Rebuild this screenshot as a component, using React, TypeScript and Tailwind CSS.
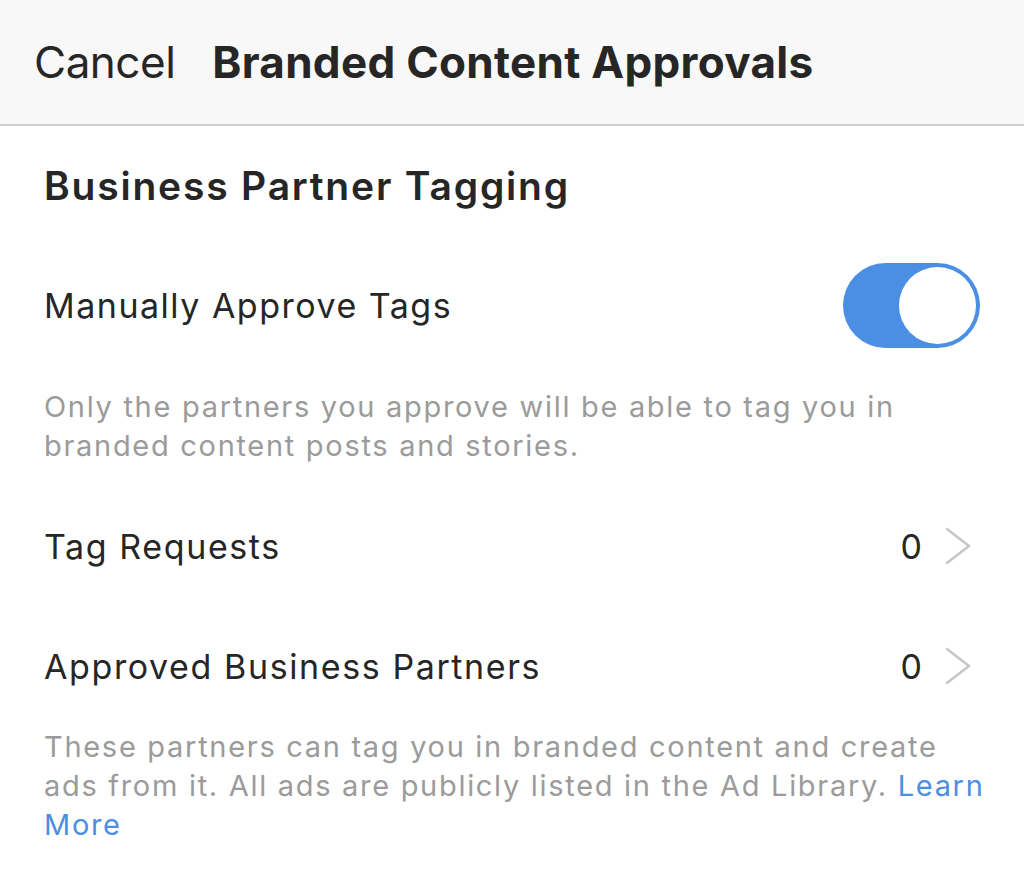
const font = { fontFamily: "Inter, 'Open Sans', sans-serif" };

const Chevron = () => (
  <svg width="28" height="38" viewBox="0 0 28 38" fill="none">
    <polyline points="3,2 25,19 3,36" stroke="#c7c7c7" strokeWidth="2.6" strokeLinecap="round" strokeLinejoin="round" />
  </svg>
);

const NavRow = ({ label, count }: { label: string; count: number }) => (
  <div className="h-[120px] flex items-center justify-between pl-[44px] pr-[52px]">
    <span className="text-[34px] tracking-[1.6px] text-[#262626]">{label}</span>
    <div className="flex items-center gap-[22px]">
      <span className="text-[34px] text-[#262626]">{count}</span>
      <Chevron />
    </div>
  </div>
);

export default function App() {
  return (
    <div className="w-[1024px] h-[870px] bg-white overflow-hidden" style={font}>
      <header className="h-[126px] bg-[#f8f8f8] border-b-2 border-[#cfcfcf] flex items-center px-[34px] gap-[37px]">
        <span className="text-[44px] text-[#262626] tracking-[-0.5px]">Cancel</span>
        <span className="text-[44px] font-bold text-[#262626] tracking-[0.3px]">
          Branded Content Approvals
        </span>
      </header>

      <div className="h-[120px] flex items-center px-[44px]">
        <h2 className="text-[39px] font-semibold tracking-[1.8px] text-[#262626]">Business Partner Tagging</h2>
      </div>

      <div className="h-[118px] flex items-center justify-between pl-[44px] pr-[44px]">
        <span className="text-[34px] tracking-[1.5px] text-[#262626]">Manually Approve Tags</span>
        <div className="w-[137px] h-[85px] rounded-full bg-[#4a8fe3] p-[4px] flex justify-end">
          <div className="w-[77px] h-[77px] rounded-full bg-white" />
        </div>
      </div>

      <p className="mt-[23px] pl-[44px] pr-[40px] text-[29px] leading-[39px] tracking-[1.7px] text-[#9b9b9b]">
        Only the partners you approve will be able to tag you in branded content posts and stories.
      </p>

      <div className="mt-[21px]">
        <NavRow label="Tag Requests" count={0} />
        <NavRow label="Approved Business Partners" count={0} />
      </div>

      <p className="mt-[1px] pl-[44px] pr-[20px] text-[29px] leading-[39px] tracking-[1.7px] text-[#9b9b9b]">
        These partners can tag you in branded content and create
        <br />
        ads from it. All ads are publicly listed in the Ad Library.{" "}
        <span className="text-[#4a8fe3]">Learn More</span>
      </p>
    </div>
  );
}
